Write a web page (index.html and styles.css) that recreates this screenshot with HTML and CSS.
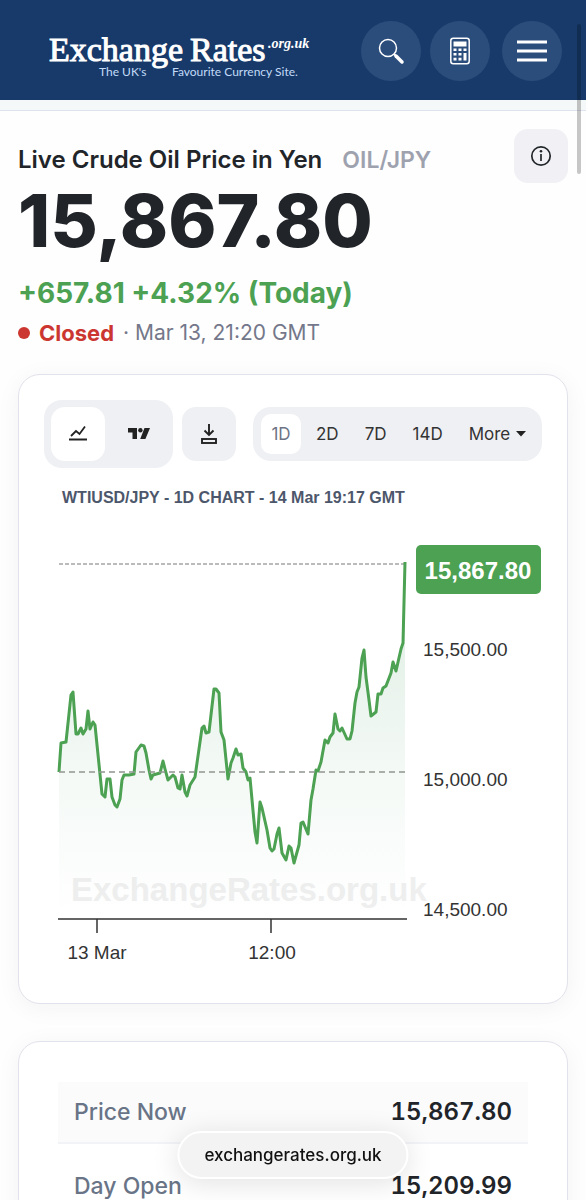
FILE: index.html
```html
<!DOCTYPE html>
<html lang="en">
<head>
    <meta charset="UTF-8">
    <meta name="viewport" content="width=device-width, initial-scale=1.0">
    <title>Live Crude Oil Price in Yen</title>
    <link rel="stylesheet" href="styles.css">
</head>
<body>
    <header class="site-header">
        <a href="#" class="logo" aria-label="Exchange Rates home">
            <svg width="264" height="56" viewBox="0 0 264 56">
                <text class="logo-name" x="0" y="38">Exchange</text>
                <text class="logo-name" x="141" y="38">Rates</text>
                <text class="logo-domain" x="219" y="25">.org.uk</text>
                <text class="logo-tag" x="50" y="53">The UK's</text>
                <text class="logo-tag" x="123" y="53">Favourite Currency Site.</text>
            </svg>
        </a>
        <nav class="header-nav">
            <button class="round-btn" aria-label="Search">
                <svg width="28" height="28" viewBox="0 0 28 28" fill="none" stroke="#fff">
                    <circle cx="11" cy="11" r="8.5" stroke-width="1.5"/>
                    <path d="M17 17l2 2" stroke-width="2"/>
                    <path d="M19 19l6 6" stroke-width="3.5" stroke-linecap="round"/>
                </svg>
            </button>
            <button class="round-btn" aria-label="Calculator">
                <svg width="20" height="28" viewBox="0 0 20 28" fill="#fff">
                    <rect x="0.8" y="1.3" width="18.4" height="25.4" rx="2.5" fill="none" stroke="#fff" stroke-width="1.5"/>
                    <path d="M3.5 4.5h13v5h-13zM3.5 11.5h3v2.6h-3zM8.5 11.5h3v2.6h-3zM13.5 11.5h3v2.6h-3zM3.5 16h3v2.6h-3zM8.5 16h3v2.6h-3zM3.5 20.8h3v2.8h-3zM8.5 20.8h3v2.8h-3zM13.5 16h3v7.6h-3z"/>
                </svg>
            </button>
            <button class="round-btn menu-btn" aria-label="Menu">
                <svg width="30" height="24" viewBox="0 0 30 24" fill="#fff">
                    <path d="M0 1.5h30v3H0zM0 10.5h30v3H0zM0 19.5h30v3H0z"/>
                </svg>
            </button>
        </nav>
    </header>
    <div class="strip"></div>

    <main>
        <section class="quote">
            <div class="quote-top">
                <h1>Live Crude Oil Price in Yen <span class="pair">OIL/JPY</span></h1>
                <button class="info-btn" aria-label="Information">
                    <svg width="22" height="22" viewBox="0 0 22 22" fill="none" stroke="#212529" stroke-width="1.7">
                        <circle cx="11" cy="11" r="9.2"/>
                        <path d="M11 9v7"/>
                        <circle cx="11" cy="6.3" r="1.3" fill="#212529" stroke="none"/>
                    </svg>
                </button>
            </div>
            <div class="price">15,867.80</div>
            <div class="change">+657.81 +4.32% (Today)</div>
            <div class="status"><span class="dot"></span><strong>Closed</strong> <span class="time">· Mar 13, 21:20 GMT</span></div>
        </section>

        <section class="card chart-card">
            <div class="toolbar">
                <div class="group">
                    <button class="tool active" aria-label="Line chart">
                        <svg width="20" height="18" viewBox="0 0 20 18" fill="none" stroke="#222">
                            <path d="M3 11l5-5 3.5 3 5.5-7.5" stroke-width="1.8"/>
                            <path d="M1 14.5h18" stroke-width="2"/>
                        </svg>
                    </button>
                    <button class="tool" aria-label="Advanced chart">
                        <svg width="22" height="12" viewBox="0 0 22 12" fill="#222">
                            <path d="M0 0h9v11H4.5V4.5H0zM16.5 0H22l-4.6 11h-5.2z"/>
                            <circle cx="12.4" cy="2.3" r="2.2"/>
                        </svg>
                    </button>
                </div>
                <button class="tool download" aria-label="Download">
                    <svg width="18" height="22" viewBox="0 0 18 22" fill="none" stroke="#222" stroke-width="1.9">
                        <path d="M9 1v10.5M4.5 7.5L9 12l4.5-4.5"/>
                        <rect x="2" y="16" width="14" height="4"/>
                    </svg>
                </button>
                <div class="ranges">
                    <button class="range active">1D</button>
                    <button class="range">2D</button>
                    <button class="range">7D</button>
                    <button class="range">14D</button>
                    <div class="more">
                        <select aria-label="More ranges">
                            <option>More</option>
                        </select>
                        <svg width="10" height="6" viewBox="0 0 10 6" fill="#222"><path d="M0 0h10L5 5.5z"/></svg>
                    </div>
                </div>
            </div>

            <svg class="chart" viewBox="44 480 498 500" role="img" aria-label="WTIUSD/JPY one day chart">
                <defs>
                    <linearGradient id="fade" gradientUnits="userSpaceOnUse" x1="0" y1="562" x2="0" y2="918">
                        <stop offset="0" stop-color="#4ca168" stop-opacity="0.2"/>
                        <stop offset="0.6" stop-color="#4ca168" stop-opacity="0.06"/>
                        <stop offset="1" stop-color="#4ca168" stop-opacity="0"/>
                    </linearGradient>
                </defs>
                <text class="chart-title" x="62" y="503">WTIUSD/JPY - 1D CHART - 14 Mar 19:17 GMT</text>
                <text class="watermark" x="71" y="901">ExchangeRates.org.uk</text>

                <path fill="url(#fade)" d="M59 918V772L61 743 66 742 71 695 73 692 76 734 78 734 81 728 83 734 86 729 88 711 90 729 93 722 95 725 102 794 105 797 107 779 110 779 112 797 115 805 117 807 120 799 122 780 124 775 129 775 134 774 136 752 141 745 144 746 146 753 149 770 151 779 153 775 160 773 163 761 165 769 168 780 173 775 175 777 178 788 180 789 182 775 185 792 187 796 190 785 195 777 202 728 204 726 206 733 209 732 214 689 216 689 219 693 221 732 224 740 228 779 231 763 233 758 236 749 238 755 241 754 243 768 246 772 248 780 250 778 255 832 257 843 260 802 262 808 267 830 270 848 272 851 274 849 277 834 279 828 282 853 286 860 289 846 291 848 294 863 299 845 301 823 303 822 308 834 311 800 313 789 316 770 318 771 321 762 325 740 328 743 330 737 333 733 335 714 338 729 340 731 342 728 347 739 350 739 352 731 355 703 357 692 359 687 362 658 364 650 366 677 369 700 371 716 376 712 378 694 381 694 383 688 386 686 391 673 393 662 396 671 401 649 403 643 405 562V918z"/>
                <path class="line-last" d="M59 564H406"/>
                <path class="series" d="M59 772L61 743 66 742 71 695 73 692 76 734 78 734 81 728 83 734 86 729 88 711 90 729 93 722 95 725 102 794 105 797 107 779 110 779 112 797 115 805 117 807 120 799 122 780 124 775 129 775 134 774 136 752 141 745 144 746 146 753 149 770 151 779 153 775 160 773 163 761 165 769 168 780 173 775 175 777 178 788 180 789 182 775 185 792 187 796 190 785 195 777 202 728 204 726 206 733 209 732 214 689 216 689 219 693 221 732 224 740 228 779 231 763 233 758 236 749 238 755 241 754 243 768 246 772 248 780 250 778 255 832 257 843 260 802 262 808 267 830 270 848 272 851 274 849 277 834 279 828 282 853 286 860 289 846 291 848 294 863 299 845 301 823 303 822 308 834 311 800 313 789 316 770 318 771 321 762 325 740 328 743 330 737 333 733 335 714 338 729 340 731 342 728 347 739 350 739 352 731 355 703 357 692 359 687 362 658 364 650 366 677 369 700 371 716 376 712 378 694 381 694 383 688 386 686 391 673 393 662 396 671 401 649 403 643 405 562"/>
                <path class="line-open" d="M59 772H407"/>

                <path class="axis" d="M58 919H407M97 919V933M271 919V933"/>
                <text class="label" x="97" y="959" text-anchor="middle">13 Mar</text>
                <text class="label" x="272" y="959" text-anchor="middle">12:00</text>
                <text class="label" x="423" y="656">15,500.00</text>
                <text class="label" x="423" y="786">15,000.00</text>
                <text class="label" x="423" y="916">14,500.00</text>

                <rect x="416" y="545" width="125" height="49" rx="5" fill="#4ca152"/>
                <text class="tag" x="478" y="579" text-anchor="middle">15,867.80</text>
            </svg>
        </section>

        <section class="card table-card">
            <table class="stats">
                <tbody>
                    <tr>
                        <th scope="row">Price Now</th>
                        <td>15,867.80</td>
                    </tr>
                    <tr>
                        <th scope="row">Day Open</th>
                        <td>15,209.99</td>
                    </tr>
                </tbody>
            </table>
        </section>
    </main>

    <div class="scroll-thumb"></div>
    <a href="#" class="url-pill">exchangerates.org.uk</a>
</body>
</html>
```
FILE: styles.css
```css
* {
    box-sizing: border-box;
}
html {
    scrollbar-width: none;
}
body {
    margin: 0;
    font-family: Inter, "Liberation Sans", sans-serif;
    background-color: #fefefe;
    color: #212529;
}
button,
select {
    font-family: inherit;
    border: none;
    padding: 0;
    background: none;
    color: inherit;
    cursor: pointer;
}
svg {
    display: block;
}

/* Header */
.site-header {
    display: flex;
    justify-content: space-between;
    align-items: center;
    height: 100px;
    padding: 2px 24px 0 49px;
    background-color: #173a6a;
}
.logo-name {
    font: 34px "Liberation Serif", serif;
    fill: #fff;
    stroke: #fff;
    stroke-width: 1;
}
.logo-domain {
    font: italic bold 14px "Liberation Serif", serif;
    fill: #fff;
}
.logo-tag {
    font: 12px Lato, sans-serif;
    fill: #c3daf8;
}
.header-nav {
    display: flex;
    gap: 9px;
}
.round-btn {
    display: flex;
    align-items: center;
    justify-content: center;
    width: 60px;
    height: 60px;
    border-radius: 50%;
    background-color: #2b4d7c;
}
.menu-btn {
    margin-left: 3px;
}
.strip {
    height: 11px;
    background-color: #f5f8f8;
    border-bottom: 1px solid #dfe3ee;
}

/* Quote */
main {
    padding: 18px 18px 0;
}
.quote-top {
    display: flex;
    justify-content: space-between;
    height: 54px;
}
h1 {
    margin: 16px 0 0;
    font-size: 24px;
    line-height: 30px;
    font-weight: 600;
    white-space: nowrap;
}
.pair {
    margin-left: 14px;
    font-size: 23px;
    color: #9ea2ae;
}
.info-btn {
    display: flex;
    align-items: center;
    justify-content: center;
    width: 54px;
    height: 54px;
    border-radius: 14px;
    background-color: #f0f0f5;
}
.price {
    font-size: 73px;
    line-height: 76px;
    font-weight: 800;
}
.change {
    margin-top: 16px;
    font-size: 28px;
    line-height: 36px;
    font-weight: 700;
    color: #4ca152;
}
.status {
    display: flex;
    align-items: center;
    gap: 9px;
    margin-top: 4px;
    font-size: 22px;
    line-height: 36px;
    color: #74788a;
}
.status strong {
    color: #cc3631;
}
.status .time {
    font-size: 21px;
}
.dot {
    width: 12px;
    height: 12px;
    border-radius: 50%;
    background-color: #cc3631;
}

/* Cards */
.card {
    border: 1px solid #e2e2ec;
    border-radius: 22px;
    background-color: #fff;
    box-shadow: 0 4px 24px rgba(30, 30, 60, 0.05);
}
.chart-card {
    margin-top: 23px;
    padding: 25px 25px 23px;
}
.toolbar {
    display: flex;
    align-items: center;
    gap: 9px;
}
.group {
    display: flex;
    padding: 7px;
    border-radius: 18px;
    background-color: #eff0f4;
}
.tool {
    display: flex;
    align-items: center;
    justify-content: center;
    width: 54px;
    height: 54px;
    border-radius: 14px;
}
.group .tool + .tool {
    width: 61px;
    padding-left: 6px;
}
.tool.active,
.range.active {
    background-color: #fff;
}
.download {
    background-color: #eff0f4;
}
.ranges {
    flex: 1;
    display: flex;
    align-items: center;
    height: 54px;
    margin-left: 8px;
    padding: 0 8px;
    border-radius: 18px;
    background-color: #eff0f4;
}
.range {
    height: 40px;
    padding: 0 13px;
    font-size: 17px;
    color: #333;
}
.range.active {
    width: 40px;
    margin-right: 2px;
    padding: 0;
    border-radius: 10px;
    color: #6d7385;
}
.more {
    display: flex;
    align-items: center;
    gap: 5px;
    margin-left: 13px;
}
.more select {
    appearance: none;
    font-size: 17px;
    color: #333;
}

/* Chart */
.chart {
    width: 100%;
    margin-top: 12px;
}
.chart text {
    font-family: "Liberation Sans", Arial, sans-serif;
}
.chart .chart-title {
    font-size: 16px;
    font-weight: bold;
    fill: #4d576b;
}
.chart .watermark {
    font-size: 33px;
    font-weight: bold;
    fill: #efefef;
}
.chart .label {
    font-size: 19px;
    fill: #333;
}
.chart .tag {
    font-size: 24px;
    font-weight: bold;
    fill: #fff;
}
.series {
    fill: none;
    stroke: #4ca152;
    stroke-width: 3;
    stroke-linejoin: round;
}
.line-last {
    stroke: #bbb;
    stroke-width: 2;
    stroke-dasharray: 4 2;
}
.line-open {
    stroke: #909590;
    stroke-width: 1.5;
    stroke-dasharray: 6 4;
}
.axis {
    fill: none;
    stroke: #333;
    stroke-width: 1.5;
}

/* Stats table */
.table-card {
    margin-top: 37px;
    padding: 28px 39px;
}
.stats {
    width: 100%;
    border-collapse: separate;
    border-spacing: 0 12px;
    line-height: 28px;
}
.stats tr:nth-child(odd) {
    background-color: #fbfbfc;
}
.stats th,
.stats td {
    padding: 16px 16px;
    border-bottom: 2px solid #f2f3f6;
    font-size: 23px;
}
.stats th {
    text-align: left;
    font-weight: 500;
    color: #697487;
}
.stats td {
    text-align: right;
    font-size: 24px;
    font-weight: 600;
    font-variant-numeric: tabular-nums;
}

/* Browser overlays */
.scroll-thumb {
    position: fixed;
    top: 24px;
    right: 5px;
    width: 4px;
    height: 150px;
    border-radius: 2px;
    background-color: rgba(0, 0, 0, 0.22);
}
.url-pill {
    position: fixed;
    bottom: 21px;
    left: 50%;
    transform: translateX(-50%);
    padding: 10px 25px;
    border: 2px solid #fff;
    border-radius: 24px;
    background-color: #f3f3f3;
    box-shadow: 0 4px 28px rgba(0, 0, 0, 0.12);
    font-size: 17px;
    line-height: 24px;
    font-weight: 500;
    color: #111;
    text-decoration: none;
}
```
